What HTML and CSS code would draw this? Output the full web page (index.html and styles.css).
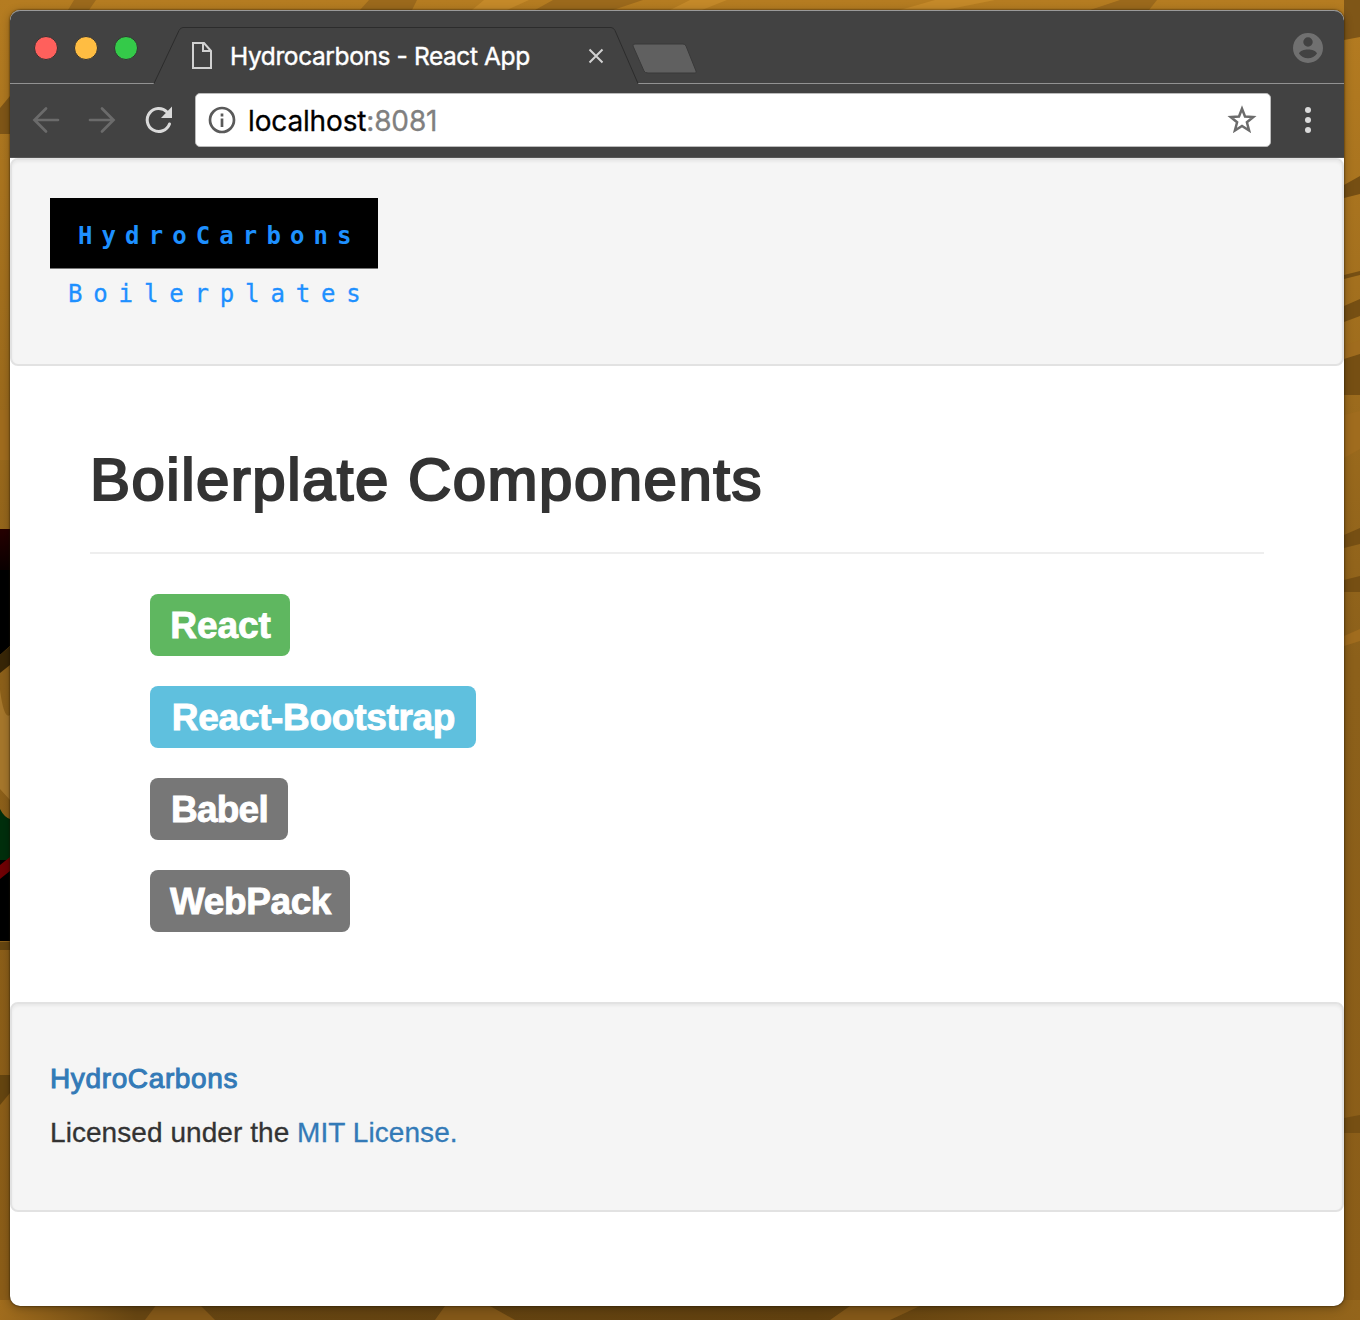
FILE: index.html
```html
<!DOCTYPE html>
<html lang="en">
<head>
<meta charset="utf-8">
<title>Hydrocarbons - React App</title>
<link rel="stylesheet" href="styles.css">
</head>
<body>
<svg class="wallpaper" viewBox="0 0 1360 1320" aria-hidden="true">
  <defs>
    <linearGradient id="wood" x1="0" y1="0" x2="0" y2="1"><stop offset="0" stop-color="#b57c21"/><stop offset=".5" stop-color="#8c601a"/><stop offset="1" stop-color="#8b5d18"/></linearGradient>
    <linearGradient id="floor"><stop offset="0" stop-color="#a06c1d"/><stop offset=".1" stop-color="#664512"/><stop offset=".6" stop-color="#60400f"/><stop offset="1" stop-color="#94651b"/></linearGradient>
    <linearGradient id="maroon" x1="0" y1="0" x2="0" y2="1"><stop offset="0" stop-color="#270001"/><stop offset="1" stop-color="#000"/></linearGradient>
  </defs>
  <path fill="url(#wood)" d="M0 0H1360V1320H0z"/>
  <path fill="url(#floor)" d="M0 1300H1360V1320H0z"/>
  <path fill="#9b691c" d="M68 10 74 0h22l-7 10zM360 10l9-10h48l-5 10zM535 10l18-10h90l-30 10zM1090 10l30-10h37l-8 10z"/>
  <path fill="#c48929" d="M472 10l12-10h45l-22 10zM670 10l20-10h37l-25 10zM900 10l35-10h60l-50 10z"/>
  <path fill="#7f5617" d="M1344 0h16v37l-16 3zM0 108l10-12v38H0z"/>
  <path fill="#764f13" d="M1344 185l16-9v18l-16 4zM1344 275l16-4v4l-16 4zM1344 306l16-7v17l-16 6zM1344 357l16-5v43h-16zM1344 535l16-7v16l-16 4zM1344 580l16-4v16h-16zM1344 1118l16-3v18h-16z"/>
  <path fill="#a06c1e" d="M1344 346l16-6v14l-16 5zM1344 415l16-4v38l-16 9zM1344 636l16-7v12l-16 5zM0 410h10v50H0z"/>
  <path fill="#654510" d="M0 1075h10v18l-10 12z"/>
  <path fill="url(#maroon)" d="M0 529h10v50L0 585z"/>
  <path fill="#000" d="M0 570h10v76L0 655z"/>
  <path fill="#382607" d="M0 655l10-9v19l-10 8z"/>
  <path fill="#a6772c" d="M0 690q4 30 10 25v85L0 789z"/>
  <path fill="#002f0c" d="M0 809q4 8 10 10v41H0z"/>
  <path fill="#000" d="M0 860h10v81H0z"/>
  <path fill="#700004" d="M0 865l10-8v14L0 879z"/>
  <path fill="#654510" d="M0 942h10v8H0z"/>
  <path fill="#825718" d="M145 1320l15-20h35l20 20zM435 1320l10-14h45l25 14zM830 1320l20-14h70l-30 14z"/>
</svg>
<div class="window">
  <header class="chrome">
    <svg class="tab-outline" viewBox="0 0 1334 74" aria-hidden="true">
      <path class="seam" d="M0 73.5H144M628 73.5h706"/>
      <path class="edge" d="M144 73.5l25-53q1.500-3 4-3H601q2.500 0 4 3l23 53"/>
      <path class="new-tab" d="M625 34h48q2 0 3 2l10 25q1 2-1 2h-47q-3 0-4-2l-11-25q-.5-2 2-2z"/>
    </svg>
    <div class="tabs">
      <div class="lights"><i class="red"></i><i class="amber"></i><i class="green"></i></div>
      <svg class="file" viewBox="0 0 22 30"><path d="M2 2h11l7 8v17H2zM12 2v8h8"/></svg>
      <span class="tab-title">Hydrocarbons - React App</span>
      <svg class="close" viewBox="0 0 16 16"><path d="M1.500 1.500l13 13m0-13l-13 13"/></svg>
      <svg class="user" viewBox="0 0 32 32"><path fill-rule="evenodd" d="M16 1a15 15 0 100 30 15 15 0 000-30zm0 4.300a4.700 4.700 0 110 9.400 4.700 4.700 0 010-9.400zM7 21.500c1-2.700 5-4 9-4s8 1.300 9 4c-2 3-5.300 4.700-9 4.700s-7-1.700-9-4.700z"/></svg>
    </div>
    <div class="toolbar">
      <svg class="arrow" viewBox="0 0 28 28"><path d="M26 14H3M14 2.500L2.500 14 14 25.500"/></svg>
      <svg class="arrow" viewBox="0 0 28 28"><path d="M2 14h23M14 2.500L25.500 14 14 25.500"/></svg>
      <svg class="reload" viewBox="0 0 30 30"><path class="ring" d="M23 7A11.500 11.500 0 1 0 25.500 19"/><path class="tip" d="M28 1.500V13H17z"/></svg>
      <div class="address">
        <svg class="info" viewBox="0 0 28 28"><circle cx="14" cy="14" r="12"/><path d="M14 12.500V21M14 7.500v3"/></svg>
        <span class="url">localhost<span class="port">:8081</span></span>
        <svg class="star" viewBox="0 0 30 30"><path d="M15 3.800l3 7.700 8.300.5-6.400 5.300 2.200 8.200L15 21l-7.100 4.500 2.200-8.200-6.400-5.300 8.300-.5z"/></svg>
      </div>
      <div class="menu"><i></i><i></i><i></i></div>
    </div>
  </header>
  <main>
    <section class="well top">
      <div class="logo"><div class="logo-name">HydroCarbons</div><div class="logo-sub">Boilerplates</div></div>
    </section>
    <section class="content">
      <h1>Boilerplate Components</h1>
      <div class="labels">
        <span class="label success">React</span>
        <span class="label cyan">React-Bootstrap</span>
        <span class="label babel">Babel</span>
        <span class="label webpack">WebPack</span>
      </div>
    </section>
    <footer class="well bottom">
      <p><a class="brand">HydroCarbons</a></p>
      <p class="license">Licensed under the <a>MIT License.</a></p>
    </footer>
  </main>
</div>
</body>
</html>
```
FILE: styles.css
```css
* { box-sizing: border-box; }
body { margin: 0; height: 1320px; padding: 10px 16px 14px 10px; overflow: hidden; background: #8b5d18; font-family: "Liberation Sans", Arial, sans-serif; color: #333; }
.wallpaper { position: absolute; inset: 0; width: 1360px; height: 1320px; z-index: -1; }
svg { flex: none; display: block; fill: none; }
.window { height: 1296px; border-radius: 10px; overflow: hidden; background: #fff; box-shadow: 0 0 2px #211500, 0 2px 10px rgba(0,0,0,.3); }
.chrome { position: relative; height: 148px; background: #424242; border-bottom: 1px solid #555; box-shadow: inset 0 1px #999; border-radius: 10px 10px 0 0; font-family: Inter, sans-serif; }
.tab-outline { position: absolute; left: 0; top: 0; width: 1334px; height: 74px; }
.seam { stroke: #929292; }
.edge { stroke: #2c2c2c; }
.new-tab { fill: #606060; stroke: #393939; }
.tabs { position: relative; display: flex; align-items: center; height: 74px; padding: 2px 20px 0 24px; }
.lights { display: flex; gap: 16px; width: 157px; }
.lights i { width: 24px; height: 24px; border-radius: 50%; border: 1px solid; }
.red { background: #ff605c; border-color: #df4844; }
.amber { background: #ffbd42; border-color: #dfa033; }
.green { background: #34ca49; border-color: #23ad32; }
.file { width: 22px; height: 30px; margin-top: 16px; stroke: #d1d1d1; stroke-width: 2; }
.tab-title { margin: 15px 0 0 17px; width: 358px; font-size: 24.500px; letter-spacing: -.4px; white-space: nowrap; color: #fff; -webkit-text-stroke: .4px #fff; }
.close { width: 16px; height: 16px; margin-top: 16px; stroke: #d1d1d1; stroke-width: 2; }
.user { width: 32px; height: 32px; margin-left: auto; fill: #707070; }
.toolbar { display: flex; align-items: center; height: 72px; padding-left: 22px; }
.arrow { width: 28px; height: 28px; margin-right: 28px; stroke: #6b6b6b; stroke-width: 2.700; stroke-linecap: round; }
.reload { width: 30px; height: 30px; }
.ring { stroke: #dadada; stroke-width: 3; stroke-linecap: round; }
.tip { fill: #dadada; }
.address { display: flex; align-items: center; width: 1076px; height: 54px; margin-left: 21px; padding: 0 13px 0 12px; background: #fff; border: 1px solid #bbb; border-radius: 5px; }
.info { width: 28px; height: 28px; stroke: #5a5a5a; stroke-width: 2.700; }
.url { margin: 2px 0 0 12px; flex: 1; font-size: 28px; letter-spacing: -.15px; color: #000; -webkit-text-stroke: .3px; }
.port { color: #808080; }
.star { width: 30px; height: 30px; stroke: #6b6b6b; stroke-width: 2.500; }
.menu { display: grid; gap: 4px; margin-left: 34px; }
.menu i { width: 6px; height: 6px; border-radius: 50%; background: #dadada; }
.well { height: 208px; background: #f5f5f5; border: 2px solid #e2e2e2; border-radius: 8px; box-shadow: inset 0 2px 3px rgba(0,0,0,.05); padding: 38px; }
.logo { width: 328px; font-family: "DejaVu Sans Mono", monospace; font-size: 24px; color: #1e90ff; white-space: nowrap; }
.logo-name { height: 71px; padding-left: 28px; line-height: 77px; background: #000; border-bottom: 1px solid #777; font-weight: bold; letter-spacing: 9.100px; }
.logo-sub { padding-left: 18px; line-height: 50px; letter-spacing: 10.850px; -webkit-text-stroke: .3px #1e90ff; }
.content { height: 636px; padding: 80px; }
h1 { margin: 0; height: 108px; border-bottom: 2px solid #eee; font-size: 60px; line-height: 68px; font-weight: 400; letter-spacing: 1.480px; white-space: nowrap; -webkit-text-stroke: 2.200px #333; }
.labels { display: flex; flex-direction: column; align-items: flex-start; gap: 30px; padding: 40px 0 0 60px; }
.label { height: 62px; padding-left: 1px; border-radius: 8px; background: #777; color: #fff; font-size: 37px; font-weight: bold; line-height: 64px; text-align: center; white-space: nowrap; letter-spacing: -.3px; -webkit-text-stroke: .9px #fff; }
.success { width: 140px; background: #5fb760; letter-spacing: -.1px; }
.cyan { width: 326px; background: #5fc0de; }
.babel { width: 138px; letter-spacing: -.8px; }
.webpack { width: 200px; letter-spacing: -.4px; }
.bottom { height: 210px; padding-top: 55px; font-size: 28px; line-height: 40px; }
.bottom p { margin: 0 0 14px; }
a { color: #337ab7; }
.brand { letter-spacing: .63px; -webkit-text-stroke: 1px #337ab7; }
.license { letter-spacing: .06px; -webkit-text-stroke: .3px; }
```
